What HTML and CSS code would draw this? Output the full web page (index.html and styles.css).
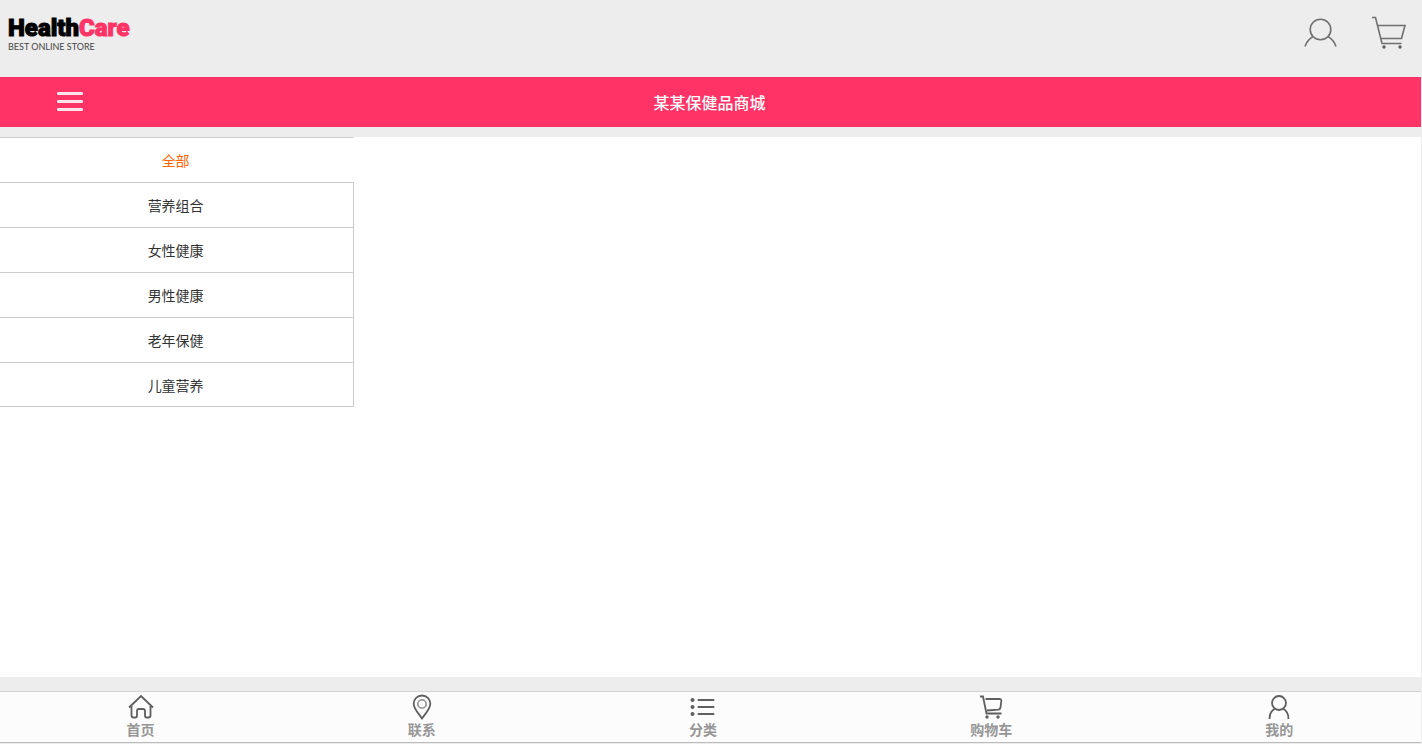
FILE: index.html
```html
<!DOCTYPE html>
<html lang="zh-CN">
<head>
<meta charset="utf-8">
<meta name="viewport" content="width=device-width, initial-scale=1">
<title>某某保健品商城</title>
<link rel="stylesheet" href="styles.css">
</head>
<body>
<div class="page">
  <header class="top">
    <a class="logo" href="#">
      <span class="logo-name">Health<span class="logo-accent">Care</span></span>
      <span class="logo-tag">BEST ONLINE STORE</span>
    </a>
    <div class="top-links">
      <a href="#" aria-label="账户">
        <svg class="top-icon" viewBox="0 0 36 36"><circle cx="17.500" cy="14.500" r="10.300"/><path d="M10 21.300C6 24 3.300 27 2 31.500M25 21.300C29 24 31.700 27 33 31.500"/></svg>
      </a>
      <a href="#" aria-label="购物车">
        <svg class="top-icon" viewBox="0 0 36 36"><path d="M1 2.500H4.500L11 28.500H30.500M6.500 10.500H34L30.500 23.500H10"/><circle class="solid" cx="13" cy="32" r="1.700"/><circle class="solid" cx="29" cy="32" r="1.700"/></svg>
      </a>
    </div>
  </header>
  <div class="bar">
    <button class="menu" type="button" aria-label="菜单"><span></span><span></span><span></span></button>
    <h1 class="title">某某保健品商城</h1>
  </div>
  <main class="content">
    <ul class="cats">
      <li><a class="cat active" href="#">全部</a></li>
      <li><a class="cat" href="#">营养组合</a></li>
      <li><a class="cat" href="#">女性健康</a></li>
      <li><a class="cat" href="#">男性健康</a></li>
      <li><a class="cat" href="#">老年保健</a></li>
      <li><a class="cat" href="#">儿童营养</a></li>
    </ul>
  </main>
  <nav class="tabs">
    <a class="tab" href="#">
      <svg class="tab-icon" viewBox="0 0 28 28"><path d="M2 14.500L14 3L26 14.500M4.500 13V22.500Q4.500 24.500 6.500 24.500H8.500Q10 24.500 10 22.500V18Q10 16 12 16H16Q18 16 18 18V22.500Q18 24.500 19.500 24.500H21.500Q23.500 24.500 23.500 22.500V13"/></svg>
      <span>首页</span>
    </a>
    <a class="tab" href="#">
      <svg class="tab-icon" viewBox="0 0 28 28"><path d="M14 25.500C11 21 5.700 16 5.700 10.800A8.300 8.300 0 0 1 22.300 10.800C22.300 16 17 21 14 25.500Z"/><circle class="light" cx="14" cy="11" r="4.200"/></svg>
      <span>联系</span>
    </a>
    <a class="tab" href="#">
      <svg class="tab-icon" viewBox="0 0 28 28"><path class="thick" d="M9.500 7H24.500M9.500 14H24.500M9.500 21H24.500"/><circle class="solid" cx="3.500" cy="7" r="2"/><circle class="solid" cx="3.500" cy="14" r="2"/><circle class="solid" cx="3.500" cy="21" r="2"/></svg>
      <span>分类</span>
    </a>
    <a class="tab" href="#">
      <svg class="tab-icon" viewBox="0 0 28 28"><path d="M3 3.500H6L9.500 20.500H24.500M8.500 6H22.500Q24.500 6 24.300 8L23.500 14.500Q23.200 16.500 21.200 16.700L10 17.500"/><circle class="solid" cx="10" cy="24" r="1.700"/><circle class="solid" cx="21" cy="24" r="1.700"/></svg>
      <span>购物车</span>
    </a>
    <a class="tab" href="#">
      <svg class="tab-icon" viewBox="0 0 28 28"><circle cx="14" cy="10" r="7"/><path d="M10 15.800C6.500 17.500 4.500 21 4.500 26M18 15.800C21.500 17.500 23.500 21 23.500 26"/></svg>
      <span>我的</span>
    </a>
  </nav>
</div>
</body>
</html>
```
FILE: styles.css
```css
* { box-sizing: border-box; }

body {
  margin: 0;
  background: #ededed;
  color: #333;
  font-family: "Noto Sans CJK SC", sans-serif;
  font-size: 14px;
}

a { color: inherit; text-decoration: none; }

.page {
  display: flex;
  flex-direction: column;
  min-height: 100vh;
  padding: 0 1px 1px 0;
}

.top {
  display: flex;
  justify-content: space-between;
  padding: 15px 14px 25px 8px;
}

.logo { display: flex; flex-direction: column; }

.logo-name {
  color: #000;
  font-family: Roboto, sans-serif;
  font-size: 24px;
  font-weight: 900;
  line-height: 26px;
  -webkit-text-stroke: 1px currentColor;
}

.logo-accent { color: #ff3366; }

.logo-tag {
  color: #444;
  font-family: Lato, sans-serif;
  font-size: 9px;
  line-height: 11px;
}

.top-links { display: flex; gap: 32px; }

.top-icon, .tab-icon {
  display: block;
  fill: none;
  stroke: #707070;
}

.top-icon { width: 36px; height: 36px; stroke-width: 1.6px; }
.tab-icon { width: 28px; height: 28px; stroke: #5f5f5f; stroke-width: 1.8px; }
.tab-icon .thick { stroke-width: 2px; stroke-linecap: round; }
.tab-icon .light { stroke: #999; }
.solid { fill: #606060; stroke: none; }

.bar {
  display: grid;
  grid-template-columns: 140px 1fr 142px;
  align-items: center;
  height: 50px;
  padding-bottom: 1px;
  background: #ff3366;
}

.menu {
  display: flex;
  flex-direction: column;
  gap: 5px;
  width: 26px;
  margin: 0;
  padding: 0;
  border: 0;
  background: none;
  justify-self: center;
}

.menu span { width: 26px; height: 3px; border-radius: 1px; background: #ffe3ea; }

.title {
  margin: 0;
  color: #fff;
  font-size: 16px;
  font-weight: 500;
  line-height: 24px;
  text-align: center;
}

.content {
  flex: 1;
  margin: 10px 0 14px;
  background: #fff;
}

.cats {
  width: calc(25% - 1px);
  min-width: 120px;
  margin: 0;
  padding: 0;
  border-bottom: 1px solid #ccc;
  list-style: none;
}

.cat {
  display: block;
  height: 45px;
  padding-right: 2px;
  border-top: 1px solid #ccc;
  border-right: 1px solid #ccc;
  line-height: 44px;
  text-align: center;
}

.cats li:last-child .cat { height: 44px; }
.cat.active { border-right-color: #fff; color: #ff6600; }

.tabs {
  display: flex;
  justify-content: space-around;
  height: 52px;
  padding-right: 1px;
  border-top: 1px solid #d3d3d3;
  border-bottom: 1px solid #bbb;
  background: #fcfcfc;
}

.tab {
  display: flex;
  flex-direction: column;
  align-items: center;
  padding-top: 1px;
  color: #969696;
  font-weight: 700;
  line-height: 17px;
}
```
